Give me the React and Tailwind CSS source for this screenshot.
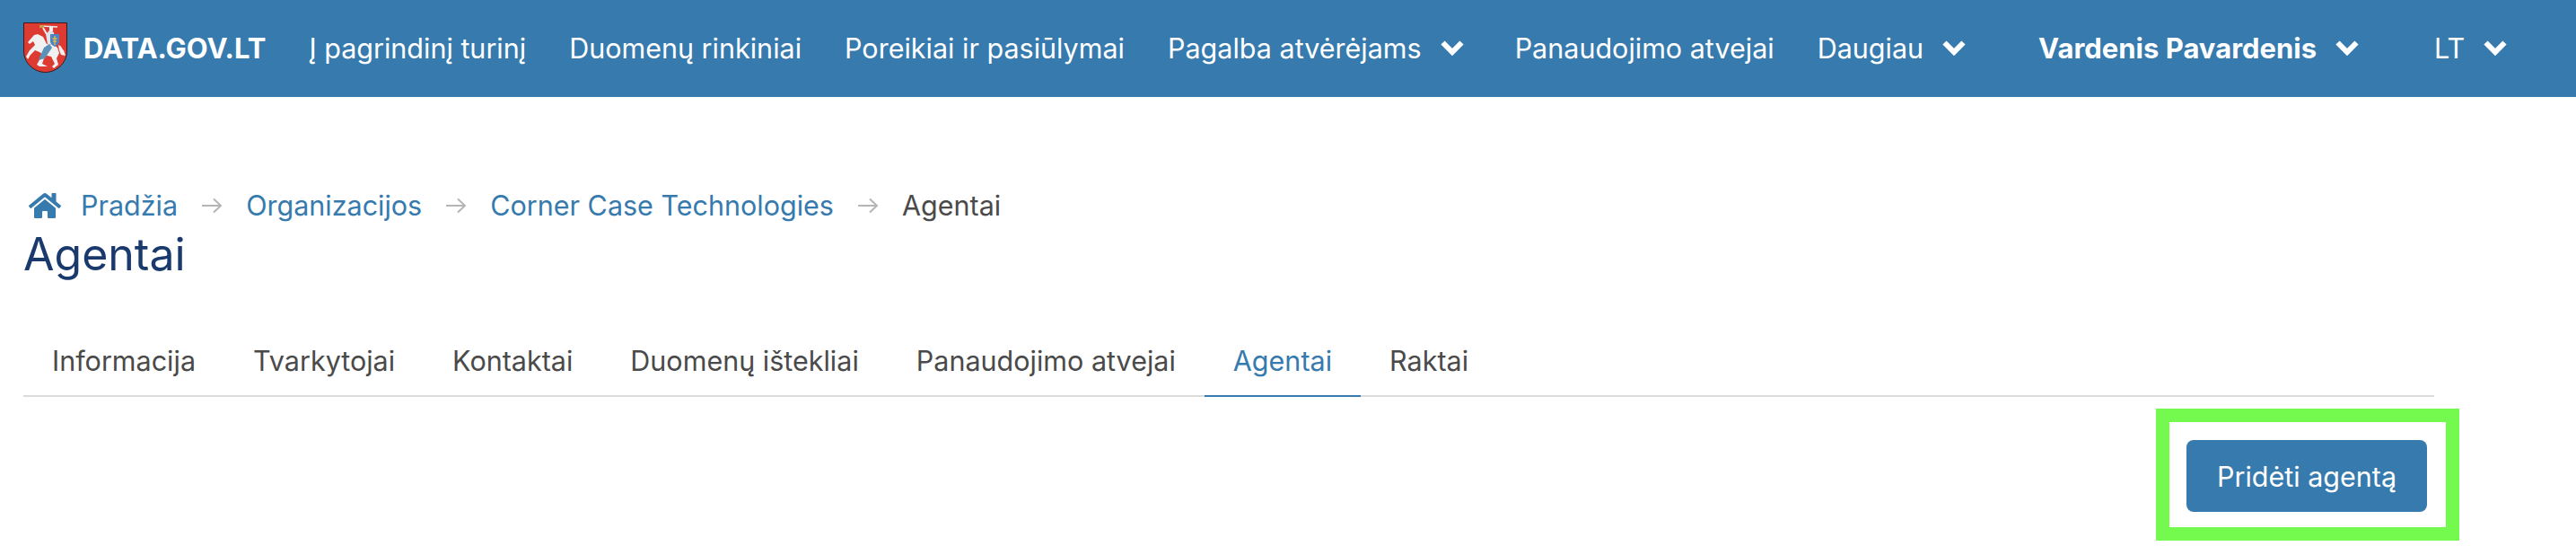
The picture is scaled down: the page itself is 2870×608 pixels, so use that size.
import React from "react";
import { FaHome } from "react-icons/fa";

const Emblem = () => (
  <svg viewBox="0 0 49 56" className="w-[49px] h-[56px] shrink-0">
    <path d="M0.5 0.5H48.5V32C48.5 46 36 55.5 24.5 55.5C13 55.5 0.5 46 0.5 32Z" fill="#dd3a32" stroke="#3a1a18" />
    {/* sword */}
    <path d="M20 4L38 5" stroke="#ececec" strokeWidth="1.6" />
    <path d="M18 3H23V6H18Z" fill="#c9a04a" />
    <path d="M22 6L26 13" stroke="#ececec" strokeWidth="2" />
    {/* horse */}
    <path
      d="M12 14L16 13L22 16L26 24L34 25L38 28L40 34L37 40L39 47L34 51L32 49L35 46L31 38L22 36L18 33L13 31L8 36L5 41L3 38L7 31L13 25L11 21L7 24L5 22Z"
      fill="#f1f1f1"
    />
    <path d="M39 25C43 26 43 30 45 31L47 37L42 36L40 31Z" fill="#f1f1f1" />
    <path d="M20 38L24 37L21 46L27 49L18 49L15 47Z" fill="#f1f1f1" />
    {/* rider */}
    <path d="M25 13L29 9L34 11L34 25L27 24Z" fill="#dfe5e8" />
    <path d="M29 5H33V10H29Z" fill="#f1f1f1" />
    <path d="M23 28L29 24L32 28L24 40L17 42L18 39Z" fill="#5b93b8" />
    {/* shield */}
    <path d="M30 13H40V21C40 24 37 26 35 27C33 26 30 24 30 21Z" fill="#4a86c5" />
    <path d="M35 15V25M32.5 18H37.5M33 21H37" stroke="#e9b93c" strokeWidth="1.3" />
  </svg>
);

const Chevron = () => (
  <svg viewBox="0 0 28 18" className="w-[28px] h-[18px] shrink-0 mr-[8px]">
    <path d="M3.5 3.5L14 14L24.5 3.5" fill="none" stroke="white" strokeWidth="6" />
  </svg>
);

const NavLink = ({ children, chevron, bold }) => (
  <a className={`flex items-center gap-[20px] text-white ${bold ? "font-bold text-[31px]" : ""}`}>
    <span>{children}</span>
    {chevron && <Chevron />}
  </a>
);

const Sep = () => (
  <svg viewBox="0 0 24 18" className="w-[24px] h-[18px] shrink-0">
    <path d="M1 9H22M14 1.5L22 9L14 16.5" fill="none" stroke="#b5b5b5" strokeWidth="2" />
  </svg>
);

const tabs = ["Informacija", "Tvarkytojai", "Kontaktai", "Duomenų ištekliai", "Panaudojimo atvejai", "Agentai", "Raktai"];

export default function App() {
  return (
    <div className="min-h-[608px] bg-white text-[30.5px] leading-[45px] text-[#4a4a4a] font-['Inter',sans-serif]">
      <nav className="h-[108px] bg-[#367aae] flex items-center pl-[26px] pb-[2px]">
        <div className="flex items-center gap-[18px] mr-[48px]">
          <Emblem />
          <span className="font-bold text-[31px] text-white">DATA.GOV.LT</span>
        </div>
        <div className="flex items-center gap-[48px]">
          <NavLink>Į pagrindinį turinį</NavLink>
          <NavLink>Duomenų rinkiniai</NavLink>
          <NavLink>Poreikiai ir pasiūlymai</NavLink>
          <NavLink chevron>Pagalba atvėrėjams</NavLink>
          <NavLink>Panaudojimo atvejai</NavLink>
          <NavLink chevron>Daugiau</NavLink>
        </div>
        <div className="flex items-center gap-[75px] ml-[72px]">
          <NavLink chevron bold>Vardenis Pavardenis</NavLink>
          <NavLink chevron>LT</NavLink>
        </div>
      </nav>

      <main className="pl-[26px] w-[2712px] pt-[98px]">
        <div className="flex items-center gap-[26px]">
          <a className="flex items-center gap-[22px] text-[#367aae]">
            <FaHome className="w-[36px] h-[32px] ml-[6px]" />
            Pradžia
          </a>
          <Sep />
          <a className="text-[#367aae]">Organizacijos</a>
          <Sep />
          <a className="text-[#367aae]">Corner Case Technologies</a>
          <Sep />
          <span>Agentai</span>
        </div>
        <h1 className="mt-[2px] text-[50px] leading-[60px] text-[#1a3a6e]">Agentai</h1>

        <div className="mt-[56px] flex border-b-2 border-[#dbdbdb]">
          {tabs.map((t) => (
            <a
              key={t}
              className={`-mb-[2px] px-[32px] pt-[10px] pb-[16px] border-b-2 ${
                t === "Agentai" ? "text-[#367aae] border-[#367aae]" : "border-transparent"
              }`}
            >
              {t}
            </a>
          ))}
        </div>

        <div className="flex justify-end pr-[8px] mt-[48px]">
          <div className="relative">
            <button className="w-[268px] h-[80px] rounded-[8px] bg-[#367aae] text-white">Pridėti agentą</button>
            <div className="absolute -left-[34px] -right-[36px] -top-[35px] -bottom-[32px] border-[15px] border-[#74f94f]" />
          </div>
        </div>
      </main>
    </div>
  );
}
